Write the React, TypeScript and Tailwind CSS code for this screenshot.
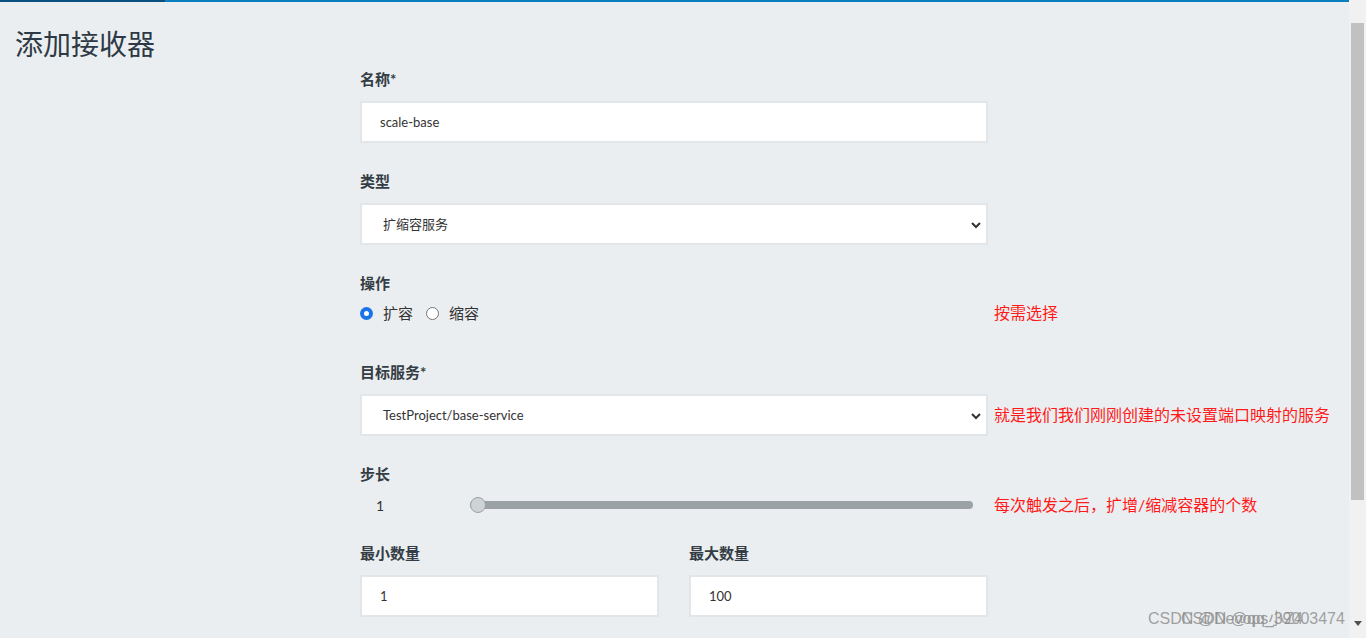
const font = "font-['Lato','Noto_Sans_CJK_SC',sans-serif]";

const Label = ({ text }: { text: string }) => (
  <div className="h-5 text-[15px] leading-5 font-bold text-[#343d45]">{text}</div>
);

const Box = ({ children }: { children: React.ReactNode }) => (
  <div className="h-[42px] flex items-center pt-[2px] bg-white border-2 border-[#e2e6e8] text-[13px] text-[#333]">
    {children}
  </div>
);

const Chevron = () => (
  <svg width="12" height="8" viewBox="0 0 12 8" className="mr-[4px]">
    <path d="M2 2l4 4 4-4" fill="none" stroke="#333" strokeWidth="2" />
  </svg>
);

const Note = ({ text }: { text: string }) => (
  <div className="ml-[6px] text-[16px] text-[#ff1a1a] whitespace-nowrap">{text}</div>
);

const Radio = ({ checked, label }: { checked?: boolean; label: string }) => (
  <div className="flex items-center">
    {checked ? (
      <span className="w-[13px] h-[13px] rounded-full bg-[#1a73e8] flex items-center justify-center">
        <span className="w-[5px] h-[5px] rounded-full bg-white" />
      </span>
    ) : (
      <span className="w-[13px] h-[13px] rounded-full border border-[#767676] bg-white" />
    )}
    <span className="ml-[10px] text-[15px] text-[#333]">{label}</span>
  </div>
);

export default function App() {
  return (
    <div className={`${font} relative flex w-[1366px] h-[638px] overflow-hidden bg-[#ebeef0]`}>
      <div className="flex-1 flex flex-col">
        <div className="flex h-[2px]">
          <div className="w-[165px] bg-[#0a4f7e]" />
          <div className="flex-1 bg-[#0a7fbf]" />
        </div>
        <h1 className="pl-[15px] pt-[22px] text-[28px] leading-[38px] text-[#2d3a45] font-['Noto_Sans_CJK_SC',sans-serif]">
          添加接收器
        </h1>
        <div className="pl-[360px] pt-[7px] flex flex-col">
          <Label text="名称*" />
          <div className="w-[628px] mt-3">
            <Box>
              <span className="pl-[18px]">scale-base</span>
            </Box>
          </div>

          <div className="mt-[28px]">
            <Label text="类型" />
          </div>
          <div className="w-[628px] mt-3">
            <Box>
              <span className="pl-[21px] flex-1">扩缩容服务</span>
              <Chevron />
            </Box>
          </div>

          <div className="mt-[28px]">
            <Label text="操作" />
          </div>
          <div className="flex items-center mt-[10px] h-5">
            <div className="w-[628px] flex items-center gap-[13px]">
              <Radio checked label="扩容" />
              <Radio label="缩容" />
            </div>
            <Note text="按需选择" />
          </div>

          <div className="mt-[39px]">
            <Label text="目标服务*" />
          </div>
          <div className="flex items-center mt-3">
            <div className="w-[628px]">
              <Box>
                <span className="pl-[21px] flex-1">TestProject/base-service</span>
                <Chevron />
              </Box>
            </div>
            <Note text="就是我们我们刚刚创建的未设置端口映射的服务" />
          </div>

          <div className="mt-[28px]">
            <Label text="步长" />
          </div>
          <div className="flex items-center mt-[11px] h-5">
            <div className="w-[628px] flex items-center">
              <span className="w-[110px] pl-[16px] text-[14px] text-[#333]">1</span>
              <div className="relative w-[503px] h-[8px] rounded-full bg-[#9aa2a6]">
                <span className="absolute left-0 top-[-4px] w-4 h-4 rounded-full bg-[#cfd3d5] border border-[#9aa2a6]" />
              </div>
            </div>
            <Note text="每次触发之后，扩增/缩减容器的个数" />
          </div>

          <div className="flex gap-[30px] mt-[28px] w-[628px]">
            <div className="flex-1">
              <Label text="最小数量" />
              <div className="mt-3">
                <Box>
                  <span className="pl-[18px]">1</span>
                </Box>
              </div>
            </div>
            <div className="flex-1">
              <Label text="最大数量" />
              <div className="mt-3">
                <Box>
                  <span className="pl-[18px]">100</span>
                </Box>
              </div>
            </div>
          </div>
        </div>
      </div>

      <div className="w-[17px] bg-[#f1f1f1] flex flex-col items-center">
        <div className="mt-[23px] w-[13px] h-[477px] bg-[#c1c1c1]" />
        <div className="flex-1" />
        <svg width="8" height="5" viewBox="0 0 8 5" className="mb-[12px]">
          <path d="M0 0h8L4 5z" fill="#505050" />
        </svg>
      </div>

      <span className="absolute left-[1148px] top-[607px] text-[16px] text-[#8a8a8a]/80 font-['Liberation_Sans','Noto_Sans_CJK_SC',sans-serif] whitespace-nowrap">
        CSDN @Devops小Z4
      </span>
      <span className="absolute left-[1181px] top-[607px] text-[16px] text-[#8a8a8a]/80 font-['Liberation_Sans',sans-serif] whitespace-nowrap">
        CSDN @qq_39003474
      </span>
    </div>
  );
}
